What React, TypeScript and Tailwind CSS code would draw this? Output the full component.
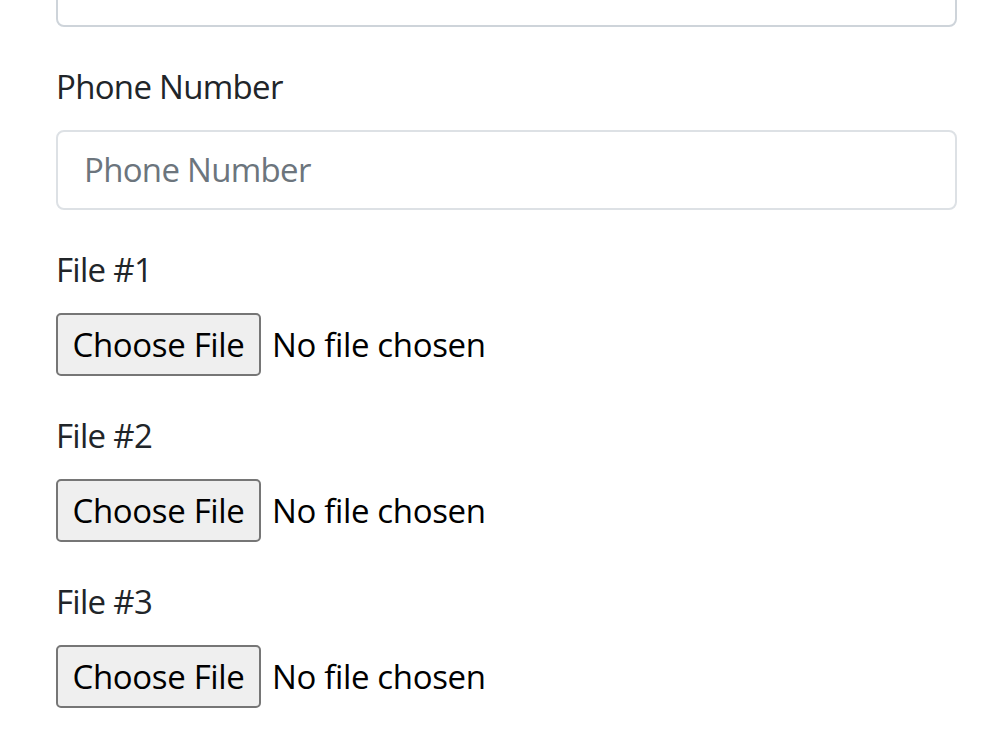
import React from "react";

const font = { fontFamily: '"Open Sans", "Noto Sans", "Liberation Sans", sans-serif' };

function FileField({ label }: { label: string }) {
  return (
    <div className="mb-[35px]">
      <div className="mb-[18px] text-[33px] leading-[50px] tracking-[-0.7px] text-[#212529]">{label}</div>
      <div className="flex h-[63px] items-center text-[33px] tracking-[-0.35px]">
        <span className="flex h-[63px] w-[205px] items-center justify-center rounded-[5px] border-2 border-[#767676] bg-[#efefef] text-black">
          Choose File
        </span>
        <span className="ml-[11px] text-black">No file chosen</span>
      </div>
    </div>
  );
}

export default function App() {
  return (
    <div className="h-[751px] w-[1000px] overflow-hidden bg-white pl-[56px] pr-[43px]" style={font}>
      <div className="mb-[35px] -mt-[53px] h-[80px] rounded-[8px] border-2 border-[#ced4da] bg-white" />
      <div className="mb-[35px]">
        <div className="mb-[18px] text-[33px] leading-[50px] tracking-[-0.7px] text-[#212529]">Phone Number</div>
        <div className="flex h-[80px] items-center rounded-[8px] border-2 border-[#dde1e5] bg-white px-[26px] text-[33px] tracking-[-0.7px] text-[#6c757d]">
          Phone Number
        </div>
      </div>
      <FileField label="File #1" />
      <FileField label="File #2" />
      <FileField label="File #3" />
    </div>
  );
}
